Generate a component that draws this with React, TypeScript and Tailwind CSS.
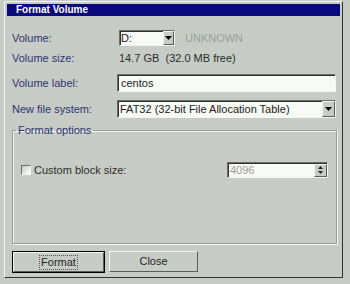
import React from "react";

function DropBtn({ w, h }: { w: number; h: number }) {
  return (
    <div
      className="flex items-center justify-center bg-[#c8ccc7] border border-t-[#f4f6f4] border-l-[#f4f6f4] border-r-[#5a5c5a] border-b-[#5a5c5a] shrink-0"
      style={{ width: w, height: h }}
    >
      <svg width="7" height="4" viewBox="0 0 7 4">
        <polygon points="0,0 7,0 3.5,4" fill="#000" />
      </svg>
    </div>
  );
}

function SpinBtn() {
  return (
    <div className="w-[13px] h-[13px] flex flex-col items-center justify-center gap-[2px] bg-[#c8ccc7] border border-t-[#f4f6f4] border-l-[#f4f6f4] border-r-[#5a5c5a] border-b-[#5a5c5a] shrink-0">
      <svg width="5" height="3" viewBox="0 0 5 3">
        <polygon points="2.5,0 5,3 0,3" fill="#222" />
      </svg>
      <svg width="5" height="3" viewBox="0 0 5 3">
        <polygon points="0,0 5,0 2.5,3" fill="#222" />
      </svg>
    </div>
  );
}

const sunken =
  "border border-t-[#6c6e6c] border-l-[#6c6e6c] border-r-[#f4f6f4] border-b-[#f4f6f4] shadow-[inset_1px_1px_0_#303230] bg-[#f8faf6]";

export default function App() {
  return (
    <div className="w-[350px] h-[284px] bg-[#c8ccc7] pt-[1px] pl-[4px] font-['Liberation_Sans',Arial,sans-serif] text-[11px] text-[#2a2c2a]">
      <div className="w-[339px] h-[277px] border border-t-[#f4f6f4] border-l-[#f4f6f4] border-r-[#303230] border-b-[#303230] p-[2px] flex flex-col">
        <div className="h-[12px] bg-[#0a0a7c] text-white font-bold text-[10px] leading-[12px] pl-[9px]">
          Format Volume
        </div>
        <div className="flex flex-col pl-[5px] pr-[4px]">
          <div className="mt-[14px] h-[16px] flex items-center">
            <div className="w-[107px] text-[#2a3470]">Volume:</div>
            <div className={`w-[56px] h-[16px] flex items-center ${sunken}`}>
              <div className="flex-1 pl-[1px] leading-[12px] text-[#222]">D:</div>
              <DropBtn w={11} h={14} />
            </div>
            <div className="ml-[10px] text-[#9a9e9a]">UNKNOWN</div>
          </div>
          <div className="mt-[4px] h-[16px] flex items-center">
            <div className="w-[107px] text-[#2a3470]">Volume size:</div>
            <div className="text-[#2a2c2a] whitespace-pre">14.7 GB  (32.0 MB free)</div>
          </div>
          <div className="mt-[8px] h-[18px] flex items-center">
            <div className="w-[105px] text-[#2a3470]">Volume label:</div>
            <div className={`flex-1 h-[18px] flex items-center pl-[3px] text-[#222] ${sunken}`}>centos</div>
          </div>
          <div className="mt-[8px] h-[18px] flex items-center">
            <div className="w-[105px] text-[#2a3470]">New file system:</div>
            <div className={`flex-1 h-[18px] flex items-center ${sunken}`}>
              <div className="flex-1 pl-[2px] text-[#222]">FAT32 (32-bit File Allocation Table)</div>
              <DropBtn w={13} h={16} />
            </div>
          </div>
          <fieldset className="mt-[6px] w-[325px] h-[120px] border border-[#9a9c9a] shadow-[inset_1px_1px_0_#f4f6f4,1px_1px_0_#f4f6f4] px-0">
            <legend className="ml-[3px] px-[2px] text-[#2a3470] leading-[13px]">Format options</legend>
            <div className="mt-[25px] h-[16px] px-[8px] flex items-center justify-between">
              <div className="flex items-center">
                <div className="w-[10px] h-[10px] border border-t-[#6c6e6c] border-l-[#6c6e6c] border-r-[#f4f6f4] border-b-[#f4f6f4] bg-gradient-to-br from-[#c8ccc7] to-[#ffffff]" />
                <div className="ml-[3px] text-[#2a2c2a]">Custom block size:</div>
              </div>
              <div className={`w-[101px] h-[16px] flex items-center ${sunken}`}>
                <div className="flex-1 pl-[2px] text-[#9a9e9a]">4096</div>
                <SpinBtn />
              </div>
            </div>
          </fieldset>
          <div className="mt-[7px] flex items-start">
            <div className="w-[93px] h-[22px] border border-black">
              <div className="w-full h-full border border-t-[#f4f6f4] border-l-[#f4f6f4] border-r-[#5a5c5a] border-b-[#5a5c5a] flex items-center justify-center">
                <span className="outline outline-1 outline-dotted outline-[#555] px-[1px] leading-[13px] text-[#222]">Format</span>
              </div>
            </div>
            <div className="ml-[4px] w-[89px] h-[21px] border border-t-[#f4f6f4] border-l-[#f4f6f4] border-r-[#5a5c5a] border-b-[#5a5c5a] flex items-center justify-center text-[#222]">
              Close
            </div>
          </div>
        </div>
      </div>
    </div>
  );
}
